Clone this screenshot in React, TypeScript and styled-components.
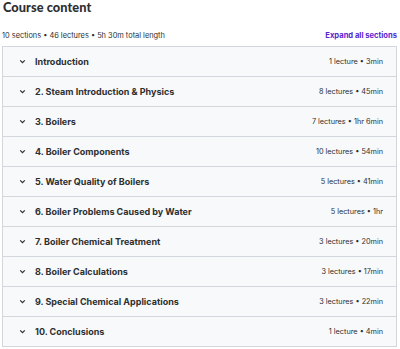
import React from "react";
import styled, { createGlobalStyle } from "styled-components";

const Global = createGlobalStyle`
  html, body { margin: 0; padding: 0; background: #ffffff; }
  body { font-family: Inter, "Noto Sans", sans-serif; color: #2d2f31; }
`;

const Page = styled.div`
  width: 400px;
  padding: 0 3px 0 2px;
  box-sizing: border-box;
`;

const Title = styled.h2`
  margin: 0;
  padding: 0 0 0 1px;
  font-family: Lato, Inter, sans-serif;
  font-size: 12.8px;
  line-height: 15px;
  font-weight: 900;
  letter-spacing: 0.05px;
  color: #2d2f31;
`;

const MetaBar = styled.div`
  display: flex;
  justify-content: space-between;
  align-items: center;
  margin: 13px 0 3px;
  height: 15px;
`;

const Meta = styled.span`
  font-size: 7.4px;
  color: #2d2f31;
`;

const Expand = styled.span`
  font-size: 7.6px;
  font-weight: 700;
  color: #5624d0;
`;

const Box = styled.div`
  border: 1px solid #d1d7dc;
  border-bottom: none;
`;

const Row = styled.div`
  display: flex;
  align-items: center;
  height: 29px;
  background: #f7f9fa;
  border-bottom: 1px solid #d1d7dc;
  padding: 0 13px 0 16px;
`;

const Chevron = styled.svg`
  width: 7px;
  height: 7px;
  margin-right: 9px;
  flex: none;
`;

const Name = styled.span`
  flex: 1;
  font-size: 9px;
  font-weight: 700;
  color: #2d2f31;
`;

const Info = styled.span`
  font-size: 7.3px;
  color: #2d2f31;
`;

const sections: [string, string][] = [
  ["Introduction", "1 lecture • 3min"],
  ["2. Steam Introduction & Physics", "8 lectures • 45min"],
  ["3. Boilers", "7 lectures • 1hr 6min"],
  ["4. Boiler Components", "10 lectures • 54min"],
  ["5. Water Quality of Boilers", "5 lectures • 41min"],
  ["6. Boiler Problems Caused by Water", "5 lectures • 1hr"],
  ["7. Boiler Chemical Treatment", "3 lectures • 20min"],
  ["8. Boiler Calculations", "3 lectures • 17min"],
  ["9. Special Chemical Applications", "3 lectures • 22min"],
  ["10. Conclusions", "1 lecture • 4min"],
];

export default function App() {
  return (
    <>
      <Global />
      <Page>
        <Title>Course content</Title>
        <MetaBar>
          <Meta>10 sections • 46 lectures • 5h 30m total length</Meta>
          <Expand>Expand all sections</Expand>
        </MetaBar>
        <Box>
          {sections.map(([n, i]) => (
            <Row key={n}>
              <Chevron viewBox="0 0 7 7">
                <path d="M1.2 2.4 L3.5 4.7 L5.8 2.4" fill="none" stroke="#2d2f31" strokeWidth="1.2" />
              </Chevron>
              <Name>{n}</Name>
              <Info>{i}</Info>
            </Row>
          ))}
        </Box>
      </Page>
    </>
  );
}
